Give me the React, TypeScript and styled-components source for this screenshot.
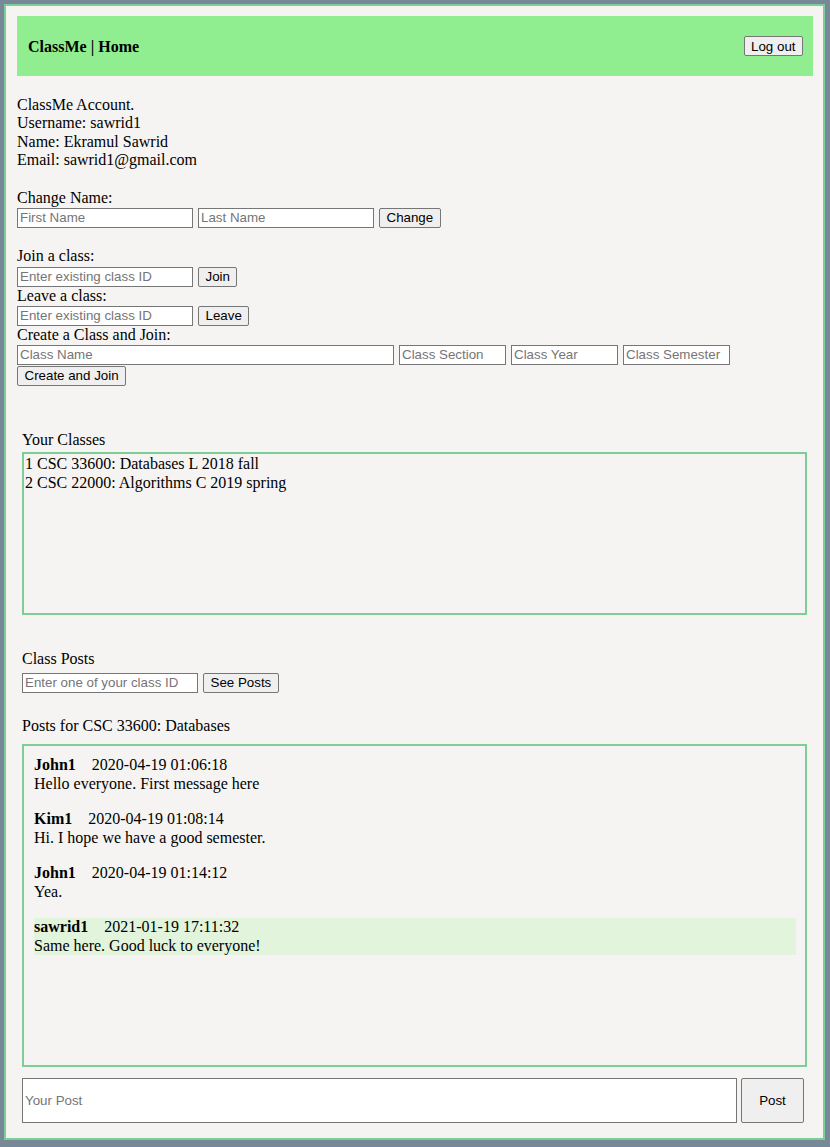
import React from 'react';
import styled, { createGlobalStyle } from 'styled-components';

const GlobalStyle = createGlobalStyle`
html, body {
  background-color: #778899;
}
body {
  margin: 0;
  padding: 4px 5px 4px 4px;
  font-family: "Liberation Serif", "Times New Roman", serif;
  font-size: 16px;
  color: #000;
}
`;

interface Post {
    user: string;
    date: string;
    text: string;
    mine?: boolean;
}

const classes = [
    '1 CSC 33600: Databases L 2018 fall',
    '2 CSC 22000: Algorithms C 2019 spring',
];

const posts: Post[] = [
    { user: 'John1', date: '2020-04-19 01:06:18', text: 'Hello everyone. First message here' },
    { user: 'Kim1', date: '2020-04-19 01:08:14', text: 'Hi. I hope we have a good semester.' },
    { user: 'John1', date: '2020-04-19 01:14:12', text: 'Yea.' },
    { user: 'sawrid1', date: '2021-01-19 17:11:32', text: 'Same here. Good luck to everyone!', mine: true },
];

const App = () => {
  return (
    <>
      <GlobalStyle />
      <Card>
        <Header>
          <Title>ClassMe | Home</Title>
          <Button>Log out</Button>
        </Header>

        <Account>
          <Line>ClassMe Account.</Line>
          <Line>Username: sawrid1</Line>
          <Line>Name: Ekramul Sawrid</Line>
          <Line>Email: sawrid1@gmail.com</Line>
        </Account>

        <Group $gap={19}>
          <Line>Change Name:</Line>
          <FormRow>
            <Input placeholder="First Name" />
            <Input placeholder="Last Name" />
            <Button>Change</Button>
          </FormRow>
        </Group>

        <Group $gap={19.5}>
          <Line>Join a class:</Line>
          <FormRow>
            <Input placeholder="Enter existing class ID" />
            <Button>Join</Button>
          </FormRow>
          <Line>Leave a class:</Line>
          <FormRow>
            <Input placeholder="Enter existing class ID" />
            <Button>Leave</Button>
          </FormRow>
          <Line>Create a Class and Join:</Line>
          <FormRow>
            <Input $w={377} placeholder="Class Name" />
            <Input $w={107} placeholder="Class Section" />
            <Input $w={107} placeholder="Class Year" />
            <Input $w={107} placeholder="Class Semester" />
          </FormRow>
          <FormRow>
            <Button>Create and Join</Button>
          </FormRow>
        </Group>

        <Section>
          <Line>Your Classes</Line>
          <ClassBox>
            {classes.map((c) => (
              <Line key={c}>{c}</Line>
            ))}
          </ClassBox>

          <PostsLabel>Class Posts</PostsLabel>
          <SearchRow>
            <Input placeholder="Enter one of your class ID" />
            <Button>See Posts</Button>
          </SearchRow>

          <FeedTitle>Posts for CSC 33600: Databases</FeedTitle>
          <PostBox>
            {posts.map((p, i) => (
              <PostItem key={i} $mine={p.mine}>
                <Line>
                  <b>{p.user}</b>
                  <PostDate>{p.date}</PostDate>
                </Line>
                <Line>{p.text}</Line>
              </PostItem>
            ))}
          </PostBox>

          <Composer>
            <ComposeInput placeholder="Your Post" />
            <PostButton>Post</PostButton>
          </Composer>
        </Section>
      </Card>
    </>
  )
}

const Card = styled.div`
border: 2px solid #7dce96;
background-color: #f5f4f2;
padding: 10px 10px 15px 11px;
`;

const Header = styled.div`
height: 60px;
background-color: #90ee90;
display: flex;
align-items: center;
justify-content: space-between;
padding: 0 10px 0 11px;
`;

const Title = styled.div`
font-weight: bold;
padding-top: 2px;
`;

const Line = styled.div`
line-height: 18.4px;
white-space: pre;
`;

const Account = styled.div`
margin-top: 20px;
`;

const Group = styled.div<{ $gap: number }>`
margin-top: ${(props) => props.$gap}px;
`;

const FormRow = styled.div`
display: flex;
align-items: flex-end;
gap: 5px;
height: 20.8px;
`;

const Input = styled.input<{ $w?: number }>`
box-sizing: border-box;
width: ${(props) => props.$w || 176}px;
height: 20px;
padding: 1px 2px;
border: 1px solid #767676;
border-radius: 0;
background: #fff;
font-family: "Liberation Sans", Arial, sans-serif;
font-size: 13.33px;
color: #000;
outline: none;
&::placeholder {
    color: #757575;
}
`;

const Button = styled.button`
box-sizing: border-box;
height: 20px;
padding: 1px 6.5px;
border: 1px solid #767676;
border-radius: 2px;
background-color: #efefef;
font-family: "Liberation Sans", Arial, sans-serif;
font-size: 13.33px;
color: #000;
cursor: pointer;
`;

const Section = styled.div`
margin-top: 45px;
padding: 0 6px 0 5px;
`;

const ClassBox = styled.div`
box-sizing: border-box;
height: 163px;
margin-top: 3px;
border: 2px solid #7dce96;
padding: 1px 1px 0;
`;

const PostsLabel = styled(Line)`
margin-top: 35px;
`;

const SearchRow = styled.div`
display: flex;
gap: 5px;
margin-top: 4px;
`;

const FeedTitle = styled(Line)`
margin-top: 24px;
`;

const PostBox = styled.div`
box-sizing: border-box;
height: 323px;
margin-top: 9.5px;
border: 2px solid #7dce96;
padding: 10px 9px 0 10px;
display: flex;
flex-direction: column;
gap: 17.2px;
`;

const PostItem = styled.div<{ $mine?: boolean }>`
background-color: ${(props) => (props.$mine ? '#e2f4dc' : 'transparent')};
`;

const PostDate = styled.span`
margin-left: 16px;
`;

const Composer = styled.div`
display: flex;
gap: 4px;
margin-top: 11px;
`;

const ComposeInput = styled(Input)`
width: 715px;
height: 45px;
`;

const PostButton = styled(Button)`
width: 63px;
height: 45px;
`;

export default App
